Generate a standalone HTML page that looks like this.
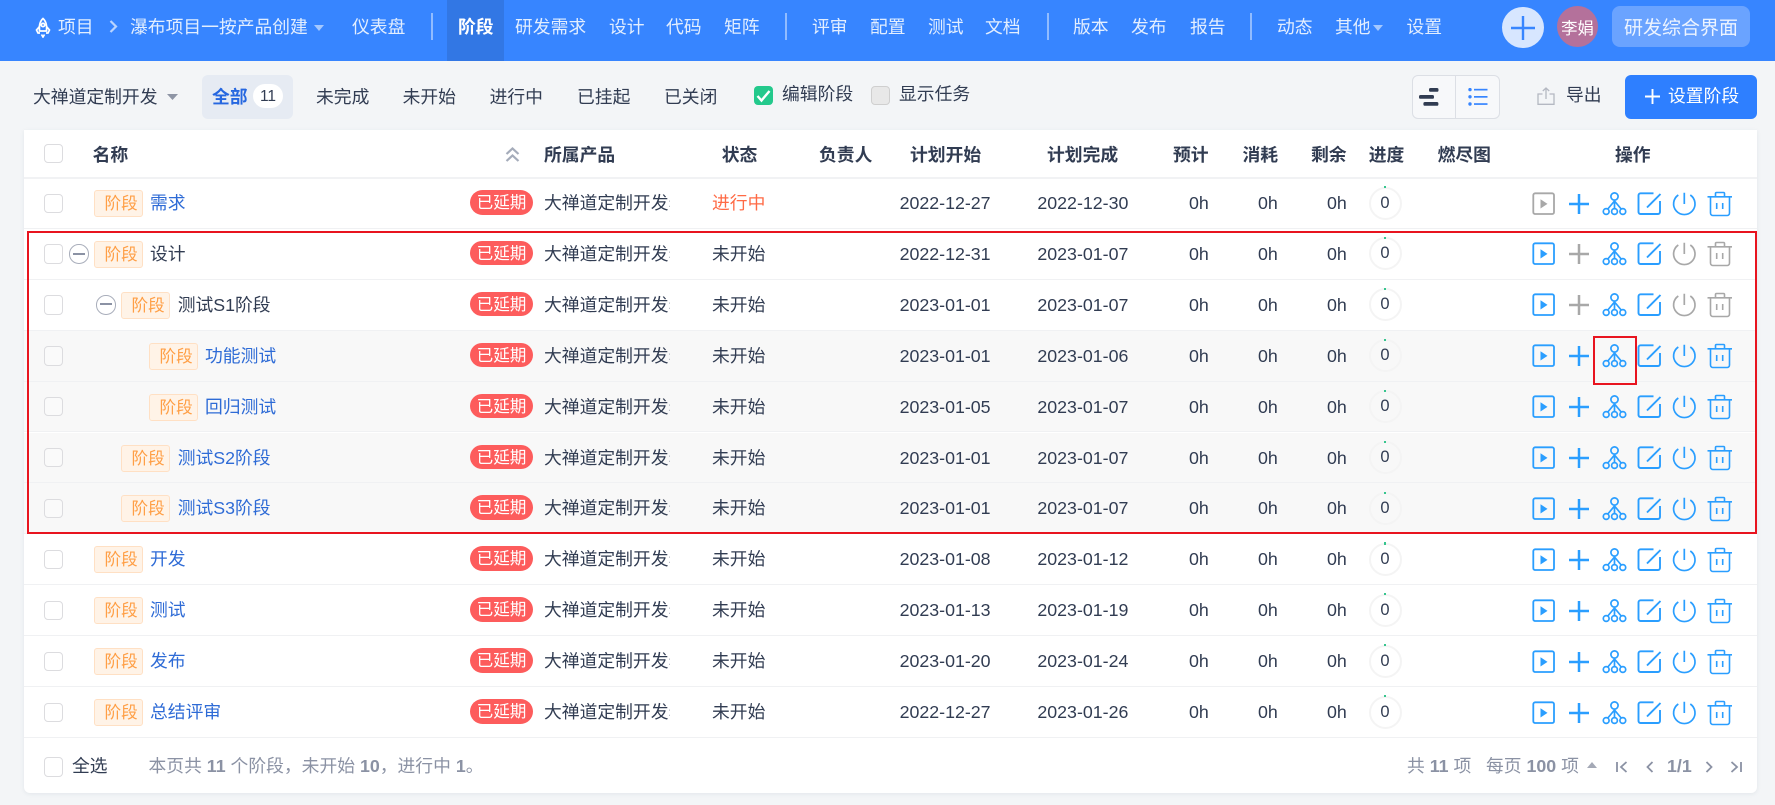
<!DOCTYPE html>
<html lang="zh"><head><meta charset="utf-8"><title>阶段</title>
<style>
*{box-sizing:border-box}
html,body{margin:0;padding:0}
body{width:1775px;height:805px;overflow:hidden;position:relative;background:#f3f5f7;font-family:"Liberation Sans","Noto Sans CJK SC",sans-serif;font-size:17.8px;color:#313c52}
.t{position:absolute;white-space:nowrap}
#hd{position:absolute;left:0;top:0;width:1775px;height:61px;background:#3785ff}
#hd .n{position:absolute;top:11px;line-height:32px;color:rgba(255,255,255,.86);white-space:nowrap}
.dv{position:absolute;top:13px;width:2px;height:27px;background:rgba(255,255,255,.45)}
.tb{position:absolute;top:80px;line-height:34px;white-space:nowrap}
#tbl{position:absolute;left:24px;top:130px;width:1733px;height:663px;background:#fff;border-radius:0 0 6px 6px;box-shadow:0 1px 4px rgba(40,60,90,.08)}
#th{position:absolute;left:0;top:130px;width:1757px;height:49px}
#thl{position:absolute;left:24px;top:177px;width:1733px;height:2px;background:#f1f2f4}
#th b{position:absolute;top:7.5px;line-height:34px;white-space:nowrap;font-weight:700}
.r{position:absolute;left:24px;width:1733px;height:50.9px;border-bottom:1px solid #f0f1f3}
.r.g{background:#f8f8f8}
.r>*{position:absolute;white-space:nowrap}
.c{left:20.4px;top:15.5px;width:18.6px;height:19.4px;border:1.2px solid #dcdcdf;border-radius:4px;background:#fff}
.g .c{background:#fafafa}
.m{top:15.5px;width:19.5px;height:19.5px;border:1.3px solid #a9aebb;border-radius:50%;background:#fff}
.m:after{content:"";position:absolute;left:2.6px;right:2.6px;top:7.2px;height:2px;background:#8b92a4}
.tg{top:12px;width:49px;height:27px;background:#fff3e7;border:1px solid #ffe0c4;border-radius:3px;color:#ff9f46;font-size:16.6px;line-height:25px;padding-left:9.5px}
.nm{top:8px;line-height:34px;color:#2e6bd6}
.nm.d{color:#313c52}
.bd{left:446px;top:12px;width:63px;height:24.5px;border-radius:12.5px;background:#fd5c5c;color:#fff;font-size:16.6px;line-height:26px;text-align:center}
.pd{left:520px;top:8px;width:126px;line-height:34px;overflow:hidden}
.pd:after{content:":";position:absolute;left:124.4px;top:0;color:#7d8596;font-size:12px}
.st{left:688px;top:8px;line-height:34px}
.st.o{color:#ff6a45}
.d1{left:875.6px;top:8px;line-height:34px}
.d2{left:1013.4px;top:8px;line-height:34px}
.h{top:8px;line-height:34px}
.h1{left:1165px}.h2{left:1234px}.h3{left:1303px}
.pg{left:1344.5px;top:8.5px;width:33px;height:33px;border:2.4px solid #f4f4f4;border-radius:50%;text-align:center;font-size:16.5px;line-height:28px;background:transparent}
.pg:after{content:"";position:absolute;left:13.4px;top:-2.4px;width:1.8px;height:2.2px;background:#36c58e}
.acts{left:1506px;top:10.5px;width:205px;height:30px;overflow:visible}
.ft{position:absolute;top:749px;line-height:34px;white-space:nowrap;color:#8b92a4;font-size:17.8px}
.ft b{font-weight:700}
</style></head>
<body>
<svg width="0" height="0" style="position:absolute">
<symbol id="acts" viewBox="0 0 205 30" overflow="visible">
<g fill="none" stroke-width="1.8">
<rect x="3.3" y="4.3" width="20.7" height="20.7" rx="1.8" style="stroke:var(--pl,#2a9eff)"/>
<path d="M10.5 10.3 17.5 14.9 10.5 19.5Z" style="fill:var(--pl,#2a9eff);stroke:none"/>
<path d="M39 15H59M49 5V25" stroke-width="2.5" style="stroke:var(--ds,#2a9eff)"/>
<g stroke="#2a9eff" stroke-width="1.7">
<circle cx="84.5" cy="7.5" r="3.6"/><circle cx="76.2" cy="22.5" r="2.9"/><circle cx="84.5" cy="22.5" r="2.9"/><circle cx="92.8" cy="22.5" r="2.9"/>
<path d="M84.5 11V19.600M84.500 12 77.800 20M84.500 12 91.200 20"/>
<path d="M123.500 4.300H110.500a2 2 0 0 0-2 2V23a2 2 0 0 0 2 2H128a2 2 0 0 0 2-2V12M117 18.500 130.500 5" stroke-width="1.900"/>
</g>
<g style="stroke:var(--ds,#2a9eff)">
<path d="M148.300 6A10.700 10.700 0 1 0 160.300 6M154.300 3.700V15" stroke-width="1.700"/>
<path d="M177.500 7.800H202M185.500 7.500V4.500a1 1 0 0 1 1-1h7a1 1 0 0 1 1 1v3M180.500 8V24a2.500 2.500 0 0 0 2.500 2.500h14a2.500 2.500 0 0 0 2.500-2.500V8M186.700 14V20M192.700 14V20" stroke-width="1.600"/>
</g>
</g>
</symbol>
</svg>

<div id="hd">
<svg class="t" style="left:35px;top:17px" width="16" height="21" viewBox="0 0 16 21" fill="none" stroke="#fff" stroke-width="1.7"><path d="M8 1.500C4.500 4.500 4 9 4.500 14h7C12 9 11.500 4.500 8 1.500Z"/><circle cx="8" cy="8" r="1.700"/><path d="M4.500 9.500 1.500 13 3 16h2M11.500 9.500 14.500 13 13 16h-2M6.500 17.500 8 20l1.500-2.500"/></svg>
<span class="n" style="left:58px">项目</span>
<svg class="t" style="left:109px;top:20px" width="9" height="13" viewBox="0 0 9 13" fill="none" stroke="rgba(255,255,255,.65)" stroke-width="2.2"><path d="M1.500 1 7 6.500 1.500 12"/></svg>
<span class="n" style="left:130px">瀑布项目一按产品创建</span>
<svg class="t" style="left:314px;top:25px" width="10" height="6"><path d="M0 0H10L5 6Z" fill="rgba(255,255,255,.55)"/></svg>
<span class="n" style="left:352px">仪表盘</span>
<span class="dv" style="left:431px"></span>
<div class="t" style="left:447px;top:0;width:57px;height:61px;background:#3277e4"></div>
<span class="n" style="left:458px;color:#fff;font-weight:700">阶段</span>
<span class="n" style="left:515px">研发需求</span>
<span class="n" style="left:609px">设计</span>
<span class="n" style="left:666px">代码</span>
<span class="n" style="left:724px">矩阵</span>
<span class="dv" style="left:785px"></span>
<span class="n" style="left:812px">评审</span>
<span class="n" style="left:870px">配置</span>
<span class="n" style="left:928px">测试</span>
<span class="n" style="left:985px">文档</span>
<span class="dv" style="left:1047px"></span>
<span class="n" style="left:1073px">版本</span>
<span class="n" style="left:1131px">发布</span>
<span class="n" style="left:1190px">报告</span>
<span class="dv" style="left:1250px"></span>
<span class="n" style="left:1277px">动态</span>
<span class="n" style="left:1335px">其他</span>
<svg class="t" style="left:1373px;top:25px" width="10" height="6"><path d="M0 0H10L5 6Z" fill="rgba(255,255,255,.55)"/></svg>
<span class="n" style="left:1406.500px">设置</span>
<div class="t" style="left:1502px;top:7px;width:41.500px;height:41px;border-radius:50%;background:#d7e6ff"></div>
<svg class="t" style="left:1510px;top:15px" width="26" height="26"><path d="M13 1V25M1 13H25" stroke="#3785ff" stroke-width="2.400" fill="none"/></svg>
<div class="t" style="left:1557px;top:6px;width:41px;height:41px;border-radius:50%;background:#b4719b;color:#fff;font-size:16.400px;line-height:47px;text-align:center">李娟</div>
<div class="t" style="left:1612px;top:6px;width:138px;height:41px;border-radius:8px;background:#6aa3ff;color:rgba(255,255,255,.88);font-size:19px;line-height:46px;text-align:center">研发综合界面</div>
</div>

<span class="tb" style="left:33px;width:127px;overflow:hidden">大禅道定制开发</span>
<svg class="t" style="left:167px;top:94px" width="11" height="6"><path d="M0 0H11L5.500 6Z" fill="#8e95a5"/></svg>
<div class="t" style="left:202px;top:75px;width:91px;height:44px;border-radius:6px;background:#e6ebf3"></div>
<span class="tb" style="left:212px;color:#2667e0;font-weight:700">全部</span>
<div class="t" style="left:253px;top:84px;width:30px;height:24px;border-radius:12px;background:#fff;font-size:15.500px;line-height:25px;text-align:center">11</div>
<span class="tb" style="left:316px">未完成</span>
<span class="tb" style="left:402.600px">未开始</span>
<span class="tb" style="left:489.600px">进行中</span>
<span class="tb" style="left:577px">已挂起</span>
<span class="tb" style="left:664px">已关闭</span>
<div class="t" style="left:754px;top:86px;width:19px;height:19px;border-radius:4px;background:#23c98c"></div>
<svg class="t" style="left:756px;top:89px" width="15" height="14" fill="none" stroke="#fff" stroke-width="2.400"><path d="M1.500 7 5.500 11.500 13.500 2"/></svg>
<span class="tb" style="left:782px;top:76.500px">编辑阶段</span>
<div class="t" style="left:871px;top:86px;width:19px;height:19px;border-radius:4px;background:#e8e8e8;border:1px solid #cfcfcf"></div>
<span class="tb" style="left:899px;top:77px">显示任务</span>

<div class="t" style="left:1412px;top:75px;width:88px;height:44px;border:1.200px solid #dcdfe5;border-radius:6px;background:#f7f8fa"></div>
<div class="t" style="left:1455px;top:75px;width:1.200px;height:44px;background:#dcdfe5"></div>
<svg class="t" style="left:1419px;top:88px" width="20" height="18" fill="#313c52"><rect x="10" y="0" width="9.500" height="3.800" rx="1.600"/><rect x="0" y="7" width="15" height="3.800" rx="1.600"/><rect x="4.400" y="14" width="15" height="3.800" rx="1.600"/></svg>
<svg class="t" style="left:1468px;top:88px" width="20" height="18" fill="#3785ff"><circle cx="2" cy="1.600" r="1.700"/><circle cx="2" cy="8.800" r="1.700"/><circle cx="2" cy="16" r="1.700"/><rect x="6" y="0.800" width="13.500" height="1.700"/><rect x="6" y="8" width="13.500" height="1.700"/><rect x="6" y="15.200" width="13.500" height="1.700"/></svg>
<svg class="t" style="left:1537px;top:87px" width="18" height="18" fill="none" stroke="#b4b8c2" stroke-width="1.300"><path d="M5.500 7H1v10.300h16V7h-4.500M9 12V1M5.800 4 9 1l3.200 3"/></svg>
<span class="tb" style="left:1566px;top:78px">导出</span>
<div class="t" style="left:1625px;top:75px;width:132px;height:44px;border-radius:6px;background:#2e7fff"></div>
<svg class="t" style="left:1645px;top:89px" width="15" height="15"><path d="M7.500 0V15M0 7.500H15" stroke="#fff" stroke-width="1.900"/></svg>
<span class="tb" style="left:1668px;top:79px;color:#fff">设置阶段</span>

<div id="tbl"></div>
<div id="thl"></div>
<div id="th">
<div class="c" style="position:absolute;left:44.400px;top:14px"></div>
<b style="left:92.600px">名称</b>
<svg class="t" style="left:505px;top:17px" width="15" height="15" fill="none" stroke="#a5acba" stroke-width="2.200"><path d="M1.500 7 7.500 1.500 13.500 7M1.500 14 7.500 8.500 13.500 14"/></svg>
<b style="left:544px">所属产品</b>
<b style="left:721.700px">状态</b>
<b style="left:819px">负责人</b>
<b style="left:910px">计划开始</b>
<b style="left:1047px">计划完成</b>
<b style="left:1173px">预计</b>
<b style="left:1242.500px">消耗</b>
<b style="left:1311px">剩余</b>
<b style="left:1368.700px">进度</b>
<b style="left:1437.600px">燃尽图</b>
<b style="left:1615px">操作</b>
</div>

<div class="r" style="top:178px"><span class="c"></span><span class="tg" style="left:70px">阶段</span><span class="nm" style="left:126px">需求</span><span class="bd">已延期</span><span class="pd">大禅道定制开发</span><span class="st o">进行中</span><span class="d1">2022-12-27</span><span class="d2">2022-12-30</span><span class="h h1">0h</span><span class="h h2">0h</span><span class="h h3">0h</span><span class="pg">0</span><svg class="acts" style="--pl:#a8a8a8"><use href="#acts"/></svg></div>
<div class="r" style="top:228.900px"><span class="c"></span><span class="m" style="left:45px"></span><span class="tg" style="left:70px">阶段</span><span class="nm d" style="left:126px">设计</span><span class="bd">已延期</span><span class="pd">大禅道定制开发</span><span class="st">未开始</span><span class="d1">2022-12-31</span><span class="d2">2023-01-07</span><span class="h h1">0h</span><span class="h h2">0h</span><span class="h h3">0h</span><span class="pg">0</span><svg class="acts" style="--ds:#a8a8a8"><use href="#acts"/></svg></div>
<div class="r" style="top:279.800px"><span class="c"></span><span class="m" style="left:72px"></span><span class="tg" style="left:97px">阶段</span><span class="nm d" style="left:153.700px">测试S1阶段</span><span class="bd">已延期</span><span class="pd">大禅道定制开发</span><span class="st">未开始</span><span class="d1">2023-01-01</span><span class="d2">2023-01-07</span><span class="h h1">0h</span><span class="h h2">0h</span><span class="h h3">0h</span><span class="pg">0</span><svg class="acts" style="--ds:#a8a8a8"><use href="#acts"/></svg></div>
<div class="r g" style="top:330.700px"><span class="c"></span><span class="tg" style="left:125px">阶段</span><span class="nm" style="left:181px">功能测试</span><span class="bd">已延期</span><span class="pd">大禅道定制开发</span><span class="st">未开始</span><span class="d1">2023-01-01</span><span class="d2">2023-01-06</span><span class="h h1">0h</span><span class="h h2">0h</span><span class="h h3">0h</span><span class="pg">0</span><svg class="acts"><use href="#acts"/></svg></div>
<div class="r g" style="top:381.600px"><span class="c"></span><span class="tg" style="left:125px">阶段</span><span class="nm" style="left:181px">回归测试</span><span class="bd">已延期</span><span class="pd">大禅道定制开发</span><span class="st">未开始</span><span class="d1">2023-01-05</span><span class="d2">2023-01-07</span><span class="h h1">0h</span><span class="h h2">0h</span><span class="h h3">0h</span><span class="pg">0</span><svg class="acts"><use href="#acts"/></svg></div>
<div class="r g" style="top:432.500px"><span class="c"></span><span class="tg" style="left:97px">阶段</span><span class="nm" style="left:153.700px">测试S2阶段</span><span class="bd">已延期</span><span class="pd">大禅道定制开发</span><span class="st">未开始</span><span class="d1">2023-01-01</span><span class="d2">2023-01-07</span><span class="h h1">0h</span><span class="h h2">0h</span><span class="h h3">0h</span><span class="pg">0</span><svg class="acts"><use href="#acts"/></svg></div>
<div class="r g" style="top:483.400px"><span class="c"></span><span class="tg" style="left:97px">阶段</span><span class="nm" style="left:153.700px">测试S3阶段</span><span class="bd">已延期</span><span class="pd">大禅道定制开发</span><span class="st">未开始</span><span class="d1">2023-01-01</span><span class="d2">2023-01-07</span><span class="h h1">0h</span><span class="h h2">0h</span><span class="h h3">0h</span><span class="pg">0</span><svg class="acts"><use href="#acts"/></svg></div>
<div class="r" style="top:534.300px"><span class="c"></span><span class="tg" style="left:70px">阶段</span><span class="nm" style="left:126px">开发</span><span class="bd">已延期</span><span class="pd">大禅道定制开发</span><span class="st">未开始</span><span class="d1">2023-01-08</span><span class="d2">2023-01-12</span><span class="h h1">0h</span><span class="h h2">0h</span><span class="h h3">0h</span><span class="pg">0</span><svg class="acts"><use href="#acts"/></svg></div>
<div class="r" style="top:585.200px"><span class="c"></span><span class="tg" style="left:70px">阶段</span><span class="nm" style="left:126px">测试</span><span class="bd">已延期</span><span class="pd">大禅道定制开发</span><span class="st">未开始</span><span class="d1">2023-01-13</span><span class="d2">2023-01-19</span><span class="h h1">0h</span><span class="h h2">0h</span><span class="h h3">0h</span><span class="pg">0</span><svg class="acts"><use href="#acts"/></svg></div>
<div class="r" style="top:636.100px"><span class="c"></span><span class="tg" style="left:70px">阶段</span><span class="nm" style="left:126px">发布</span><span class="bd">已延期</span><span class="pd">大禅道定制开发</span><span class="st">未开始</span><span class="d1">2023-01-20</span><span class="d2">2023-01-24</span><span class="h h1">0h</span><span class="h h2">0h</span><span class="h h3">0h</span><span class="pg">0</span><svg class="acts"><use href="#acts"/></svg></div>
<div class="r" style="top:687px"><span class="c"></span><span class="tg" style="left:70px">阶段</span><span class="nm" style="left:126px">总结评审</span><span class="bd">已延期</span><span class="pd">大禅道定制开发</span><span class="st">未开始</span><span class="d1">2022-12-27</span><span class="d2">2023-01-26</span><span class="h h1">0h</span><span class="h h2">0h</span><span class="h h3">0h</span><span class="pg">0</span><svg class="acts"><use href="#acts"/></svg></div>

<div class="t" style="left:27px;top:231px;width:1730px;height:303px;border:2px solid #e8141f"></div>
<div class="t" style="left:1593px;top:336px;width:44px;height:49px;border:2px solid #e8141f"></div>

<div class="c" style="position:absolute;left:44.400px;top:757px;height:20px"></div>
<span class="t" style="left:72px;top:749px;line-height:34px">全选</span>
<span class="ft" style="left:148.500px">本页共 <b>11</b> 个阶段，未开始 <b>10</b>，进行中 <b>1</b>。</span>
<span class="ft" style="left:1407px">共 <b>11</b> 项</span>
<span class="ft" style="left:1486px">每页 <b>100</b> 项</span>
<svg class="t" style="left:1587px;top:762px" width="10" height="6"><path d="M0 6H10L5 0Z" fill="#a4a9b6"/></svg>
<svg class="t" style="left:1616px;top:760px" width="12" height="14" fill="none" stroke="#8b92a4" stroke-width="1.800"><path d="M1 2V12M10.500 2 5 7l5.500 5"/></svg>
<svg class="t" style="left:1646px;top:760px" width="8" height="14" fill="none" stroke="#8b92a4" stroke-width="1.800"><path d="M6.500 2 1.500 7l5 5"/></svg>
<span class="ft" style="left:1667px;font-weight:700">1/1</span>
<svg class="t" style="left:1705px;top:760px" width="8" height="14" fill="none" stroke="#8b92a4" stroke-width="1.800"><path d="M1.500 2 6.500 7l-5 5"/></svg>
<svg class="t" style="left:1730px;top:760px" width="12" height="14" fill="none" stroke="#8b92a4" stroke-width="1.800"><path d="M11 2V12M1.500 2 7 7l-5.500 5"/></svg>
</body></html>
